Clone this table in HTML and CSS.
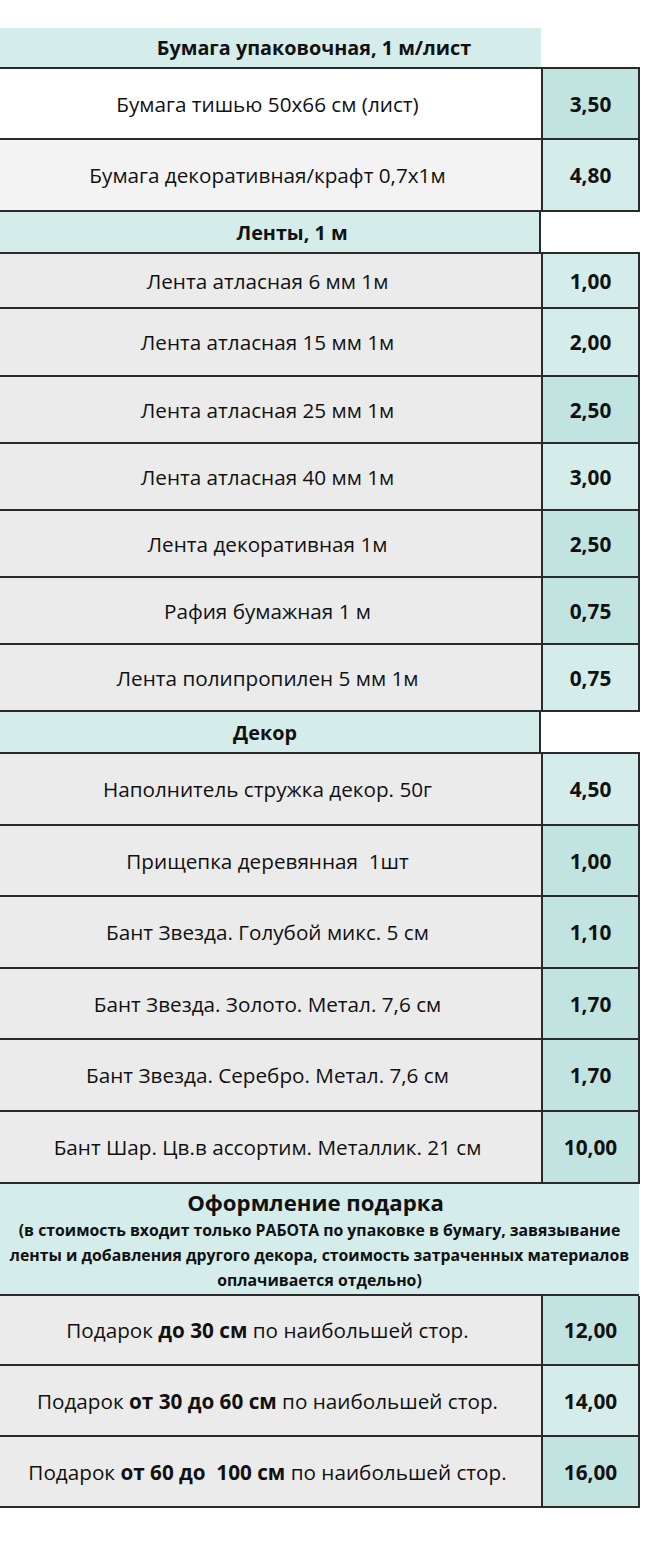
FILE: index.html
```html
<!DOCTYPE html>
<html lang="ru">
<head>
<meta charset="utf-8">
<title>Прайс</title>
<link rel="stylesheet" href="styles.css">
</head>
<body>
<div class="sheet">
  <div class="sec h41"><div class="title shift-1">Бумага упаковочная, 1 м/лист</div><div class="blank"></div></div>
  <div class="row h71"><div class="name white">Бумага тишью 50x66 см (лист)</div><div class="price dark">3,50</div></div>
  <div class="row h72"><div class="name light">Бумага декоративная/крафт 0,7x1м</div><div class="price">4,80</div></div>

  <div class="sec h42"><div class="title bordered shift-2">Ленты, 1 м</div><div class="blank"></div></div>
  <div class="row h55"><div class="name">Лента атласная 6 мм 1м</div><div class="price">1,00</div></div>
  <div class="row h68"><div class="name">Лента атласная 15 мм 1м</div><div class="price">2,00</div></div>
  <div class="row h67"><div class="name">Лента атласная 25 мм 1м</div><div class="price dark">2,50</div></div>
  <div class="row h67"><div class="name">Лента атласная 40 мм 1м</div><div class="price">3,00</div></div>
  <div class="row h67"><div class="name">Лента декоративная 1м</div><div class="price dark">2,50</div></div>
  <div class="row h67"><div class="name">Рафия бумажная 1 м</div><div class="price dark">0,75</div></div>
  <div class="row h67"><div class="name">Лента полипропилен 5 мм 1м</div><div class="price">0,75</div></div>

  <div class="sec h42"><div class="title bordered shift-3">Декор</div><div class="blank"></div></div>
  <div class="row h72"><div class="name">Наполнитель стружка декор. 50г</div><div class="price">4,50</div></div>
  <div class="row h71"><div class="name">Прищепка деревянная&nbsp; 1шт</div><div class="price dark">1,00</div></div>
  <div class="row h72"><div class="name">Бант Звезда. Голубой микс. 5 см</div><div class="price dark">1,10</div></div>
  <div class="row h71"><div class="name">Бант Звезда. Золото. Метал. 7,6 см</div><div class="price dark">1,70</div></div>
  <div class="row h72"><div class="name">Бант Звезда. Серебро. Метал. 7,6 см</div><div class="price dark">1,70</div></div>
  <div class="row h72"><div class="name">Бант Шар. Цв.в ассортим. Металлик. 21 см</div><div class="price dark">10,00</div></div>

  <div class="wide">
    <div class="wide-title">Оформление подарка</div>
    <div class="wide-sub">(в стоимость входит только РАБОТА по упаковке в бумагу, завязывание ленты и добавления другого декора, стоимость затраченных материалов оплачивается отдельно)</div>
  </div>
  <div class="row h70"><div class="name">Подарок <b>до 30 см</b> по наибольшей стор.</div><div class="price dark">12,00</div></div>
  <div class="row h71"><div class="name">Подарок <b>от 30 до 60 см</b> по наибольшей стор.</div><div class="price">14,00</div></div>
  <div class="row h71"><div class="name">Подарок <b>от 60 до&nbsp; 100 см</b> по наибольшей стор.</div><div class="price dark">16,00</div></div>
</div>
</body>
</html>
```
FILE: styles.css
```css
* { box-sizing: border-box; }
html, body { margin: 0; padding: 0; background: #ffffff; }
body {
  font-family: "Open Sans", "Liberation Sans", sans-serif;
  color: #111;
}
.sheet {
  width: 640px;
  padding-top: 28px;
  display: flex;
  flex-direction: column;
}
.sec, .row {
  display: grid;
  grid-template-columns: 541px 99px;
  border-bottom: 2px solid #2a2a2a;
}
.title {
  background: #d4edeb;
  font-weight: 700;
  font-size: 19.8px;
  display: flex;
  align-items: center;
  justify-content: center;
}
.title.bordered { border-right: 2px solid #2a2a2a; }
.shift-1 { padding-left: 87px; }
.shift-2 { padding-left: 45px; }
.shift-3 { padding-right: 9px; }
.blank { background: #fff; }
.name {
  background: #ebebeb;
  font-size: 20.7px;
  display: flex;
  align-items: center;
  justify-content: center;
  white-space: pre;
  padding-right: 6px;
}
.name.white { background: #ffffff; }
.name.light { background: #f3f3f3; }
.name b { font-weight: 700; }
.price {
  background: #d4edeb;
  border-left: 2px solid #2a2a2a;
  border-right: 2px solid #2a2a2a;
  font-weight: 700;
  font-size: 20.8px;
  display: flex;
  align-items: center;
  justify-content: center;
}
.price.dark { background: #c2e4e0; }
.wide {
  background: #d4edeb;
  height: 112px;
  border-bottom: 2px solid #2a2a2a;
  width: 639px;
  text-align: center;
  padding-top: 3px;
}
.wide-title {
  font-weight: 700;
  font-size: 22.2px;
  line-height: 31px;
  padding-right: 8px;
}
.wide-sub {
  font-weight: 700;
  font-size: 15.8px;
  line-height: 25px;
  padding: 0 2px;
}
.h41 { height: 41px; }
.h42 { height: 42px; }
.h55 { height: 55px; }
.h67 { height: 67px; }
.h68 { height: 68px; }
.h70 { height: 70px; }
.h71 { height: 71px; }
.h72 { height: 72px; }
```
